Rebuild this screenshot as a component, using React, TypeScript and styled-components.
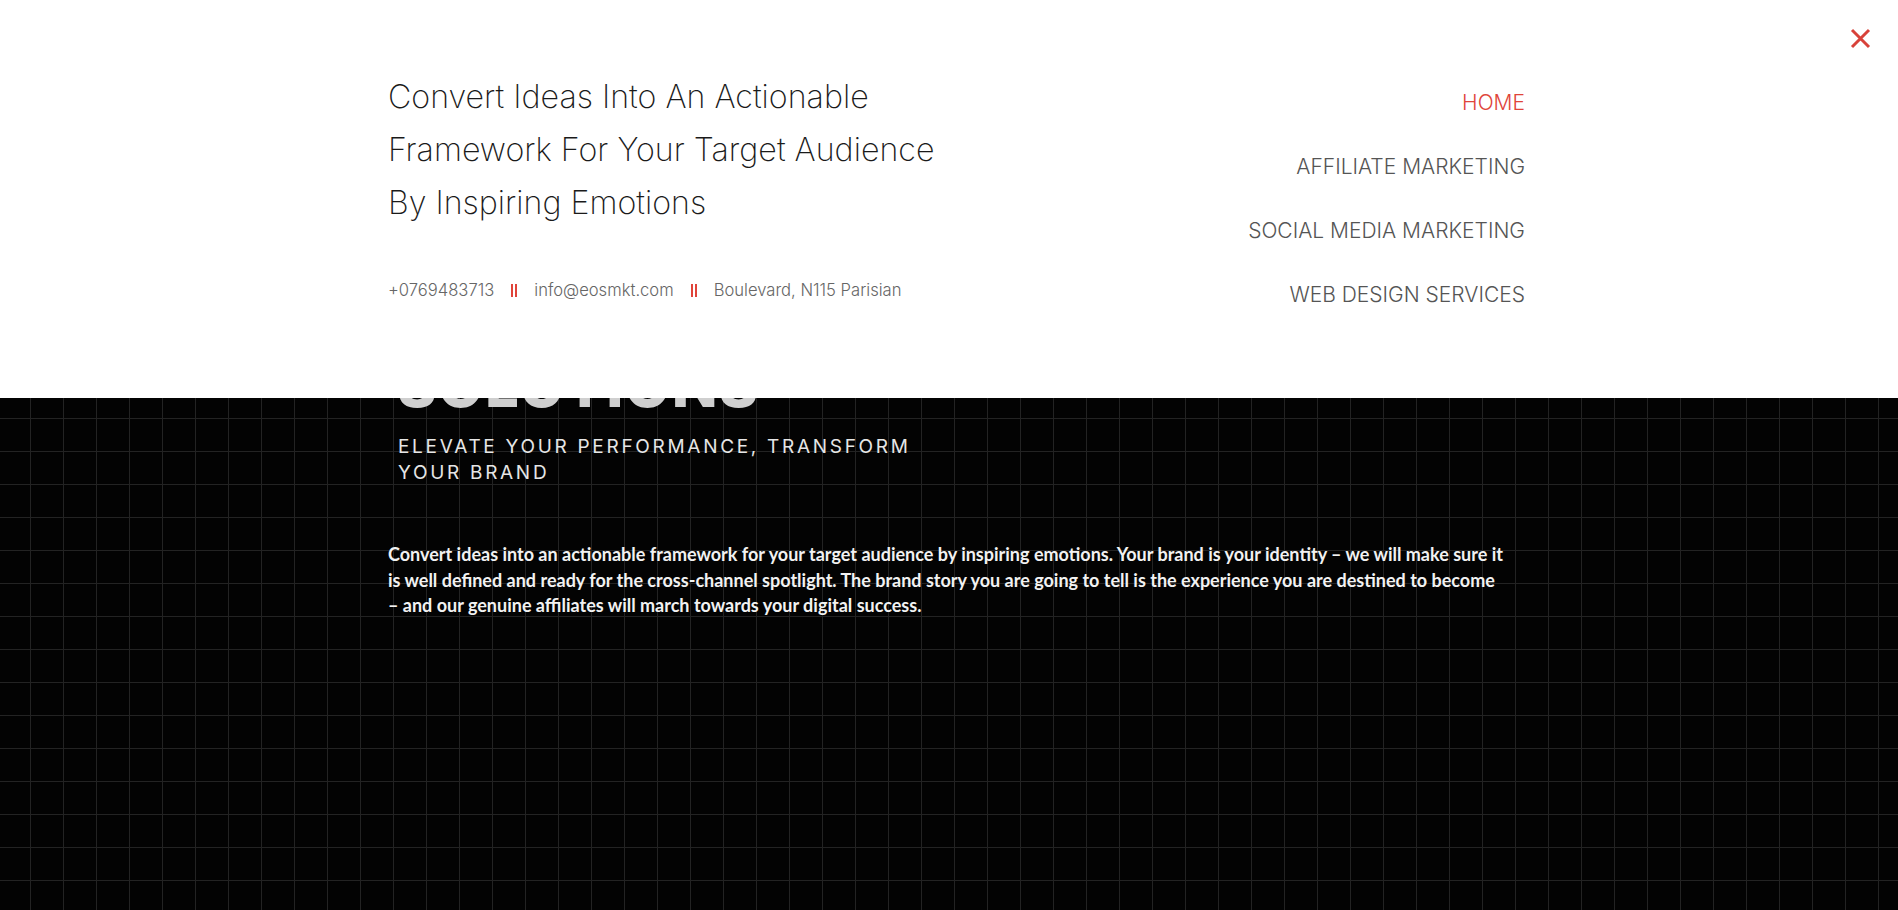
import React from "react";
import styled, { createGlobalStyle } from "styled-components";

const GlobalStyle = createGlobalStyle`
  html, body {
    margin: 0;
    padding: 0;
  }
  body {
    background-color: #030303;
    background-image:
      linear-gradient(to right, #232323 1px, transparent 1px),
      linear-gradient(to bottom, #232323 1px, transparent 1px);
    background-size: 33px 33px;
    background-position: 30px 22px;
    min-height: 910px;
    overflow: hidden;
    font-family: Inter, "Liberation Sans", sans-serif;
  }
`;

const Hero = styled.section`
  display: flex;
  flex-direction: column;
  padding: 355px 373px 0 388px;
  height: 910px;
  box-sizing: border-box;
`;

const BigHeading = styled.h1`
  margin: 0 0 0 9px;
  font-family: Inter, "Liberation Sans", sans-serif;
  font-weight: 800;
  font-size: 60px;
  line-height: 60px;
  letter-spacing: 1px;
  color: #cfcfcf;
`;

const Subtitle = styled.h2`
  margin: 19px 0 0 10px;
  font-family: Inter, "Liberation Sans", sans-serif;
  font-weight: 400;
  font-size: 19px;
  line-height: 26px;
  letter-spacing: 2.7px;
  color: #e6e6e6;
  text-transform: uppercase;
`;

const Paragraph = styled.p`
  margin: 56px 0 0 0;
  font-family: Lato, "Liberation Sans", sans-serif;
  font-weight: 700;
  font-size: 18px;
  line-height: 25.5px;
  color: #f2f2f2;
  white-space: nowrap;
`;

const Overlay = styled.div`
  position: fixed;
  top: 0;
  left: 0;
  right: 0;
  height: 398px;
  background: #ffffff;
  display: flex;
  justify-content: space-between;
  padding: 70px 373px 0 388px;
  box-sizing: border-box;
`;

const LeftCol = styled.div`
  display: flex;
  flex-direction: column;
`;

const Title = styled.h3`
  margin: 0;
  font-family: Inter, "Liberation Sans", sans-serif;
  font-weight: 200;
  font-size: 32.2px;
  line-height: 53px;
  color: #1a1a1a;
`;

const ContactRow = styled.div`
  display: flex;
  align-items: center;
  gap: 17px;
  margin-top: 51px;
  font-family: Inter, "Liberation Sans", sans-serif;
  font-weight: 300;
  font-size: 16.6px;
  color: #666;
`;

const Divider = styled.span`
  display: inline-block;
  width: 2px;
  height: 13px;
  border-left: 2px solid #e0443a;
  border-right: 2px solid #e0443a;
`;

const Nav = styled.nav`
  display: flex;
  flex-direction: column;
  align-items: flex-end;
  padding-top: 1px;
`;

const NavItem = styled.a<{ $active?: boolean }>`
  display: block;
  height: 64px;
  line-height: 64px;
  font-family: Inter, "Liberation Sans", sans-serif;
  font-weight: 300;
  font-size: 21px;
  text-transform: uppercase;
  color: ${(p) => (p.$active ? "#e0443a" : "#555")};
  text-decoration: none;
`;

const CloseButton = styled.button`
  position: absolute;
  top: 27px;
  right: 27px;
  width: 22px;
  height: 22px;
  padding: 0;
  border: none;
  background: transparent;
  cursor: pointer;
  display: flex;
  align-items: center;
  justify-content: center;
`;

export default function App() {
  return (
    <>
      <GlobalStyle />
      <Hero>
        <BigHeading>SOLUTIONS</BigHeading>
        <Subtitle>
          Elevate your performance, transform
          <br />
          your brand
        </Subtitle>
        <Paragraph>
          Convert ideas into an actionable framework for your target audience by inspiring emotions. Your brand is your identity – we will make sure it
          <br />
          is well defined and ready for the cross-channel spotlight. The brand story you are going to tell is the experience you are destined to become
          <br />
          – and our genuine affiliates will march towards your digital success.
        </Paragraph>
      </Hero>
      <Overlay>
        <LeftCol>
          <Title>
            Convert Ideas Into An Actionable
            <br />
            Framework For Your Target Audience
            <br />
            By Inspiring Emotions
          </Title>
          <ContactRow>
            <span>+0769483713</span>
            <Divider />
            <span>info@eosmkt.com</span>
            <Divider />
            <span>Boulevard, N115 Parisian</span>
          </ContactRow>
        </LeftCol>
        <Nav>
          <NavItem $active href="#">Home</NavItem>
          <NavItem href="#">Affiliate Marketing</NavItem>
          <NavItem href="#">Social Media Marketing</NavItem>
          <NavItem href="#">Web Design Services</NavItem>
        </Nav>
        <CloseButton aria-label="Close">
          <svg width="21" height="21" viewBox="0 0 21 21">
            <path d="M2 2 L19 19 M19 2 L2 19" stroke="#d8423a" strokeWidth="3" />
          </svg>
        </CloseButton>
      </Overlay>
    </>
  );
}
